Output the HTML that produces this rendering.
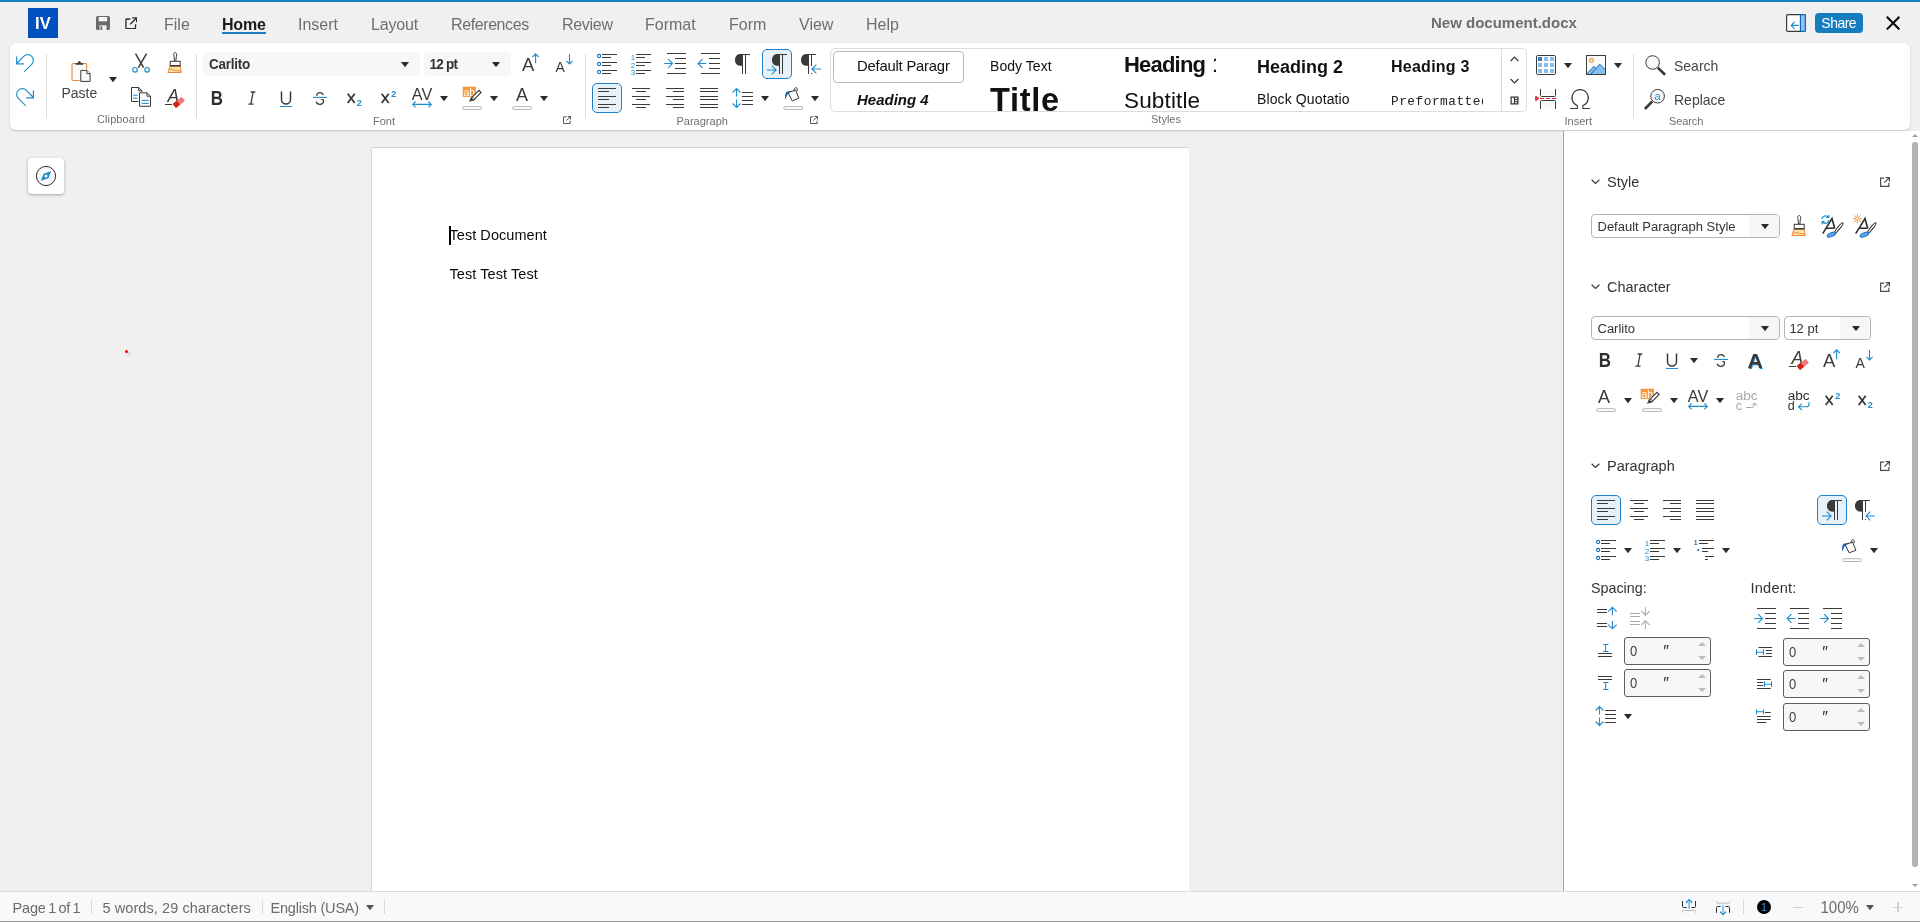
<!DOCTYPE html>
<html lang="en"><head><meta charset="utf-8"><title>New document.docx</title>
<style>
*{box-sizing:border-box;margin:0;padding:0}
html,body{width:1920px;height:922px;overflow:hidden;background:#f0f0f0;font-family:"Liberation Sans",sans-serif;color:#333}
.a{position:absolute}
svg.i{position:absolute;width:24px;height:24px;overflow:visible}
svg.d{position:absolute;width:8px;height:6px}
svg.l{position:absolute;width:10px;height:10px}
.t{position:absolute;white-space:nowrap;line-height:1}
#topline{left:0;top:0;width:1920px;height:2px;background:#157cbe}
#logo{left:28px;top:8px;width:30px;height:30px;background:#0050c0;color:#fff;font-weight:bold;font-size:16.5px;text-align:center;line-height:31px;letter-spacing:.3px}
.m{position:absolute;top:16px;font-size:16px;line-height:18px;color:#6e6e6e;white-space:nowrap;transform:scaleY(1.07);transform-origin:0 14.5px}
#ribbon{left:10px;top:43px;width:1900px;height:87px;background:#fff;border-radius:5.5px;box-shadow:0 1px 2px rgba(0,0,0,.19),0 0 1px rgba(0,0,0,.12)}
.sep{position:absolute;width:1px;background:#dedad6}
.lab{position:absolute;font-size:11px;line-height:12px;color:#707070;white-space:nowrap}
.sel{position:absolute;width:30px;height:30px;border:1px solid #1e7fc8;border-radius:5px;background:#e6f1f9}
.cb{position:absolute;height:24px;background:#f7f7f7;border-radius:4px}
.cbt{position:absolute;font-weight:bold;font-size:13.5px;line-height:14px;color:#333;white-space:nowrap;transform:scaleY(1.1);transform-origin:0 11.7px}
#stylebox{left:830px;top:48px;width:697px;height:64px;border:1px solid #dcdcdc;border-radius:5px;background:#fff;overflow:hidden}
.st{position:absolute;white-space:nowrap;color:#111;overflow:hidden}
.big{position:absolute;font-size:14px;line-height:16px;color:#454545;white-space:nowrap;transform:scaleY(1.08);transform-origin:0 12.85px}
#sidebar{left:1563px;top:131px;width:357px;height:760px;background:#fff;border-left:1px solid #a3a3a3}
.sh{position:absolute;font-size:14.5px;line-height:16px;color:#333;white-space:nowrap;transform:scaleY(1.05);transform-origin:0 13px}
.scb{position:absolute;height:24px;border:1px solid #b4b4b4;border-radius:4px;background:#fff;overflow:hidden}
.scb i{position:absolute;right:0;top:0;bottom:0;width:30px;background:#f7f7f7}
.scb b{position:absolute;left:5.5px;top:5px;font-weight:normal;font-size:13px;line-height:13px;color:#333;white-space:nowrap;transform:scaleY(1.04);transform-origin:0 11px}
.spin{position:absolute;width:87px;height:28px;border:1px solid #5e5e5e;border-radius:3px;background:#f7f7f7}
.spin b{position:absolute;left:5px;top:7px;font-weight:normal;font-size:13px;line-height:13px;color:#444;transform:scaleY(1.1);transform-origin:0 11px}
.spin u{position:absolute;left:37.5px;top:5.5px;font-style:italic;text-decoration:none;font-size:16px;line-height:15px;color:#2e2e2e}
.spin s{position:absolute;right:3.6px;width:8.8px;height:0;border-left:4.4px solid transparent;border-right:4.4px solid transparent}
.spin s.u{top:3.6px;border-bottom:4.4px solid #bdbdbd}
.spin s.dn{bottom:3.8px;border-top:4.4px solid #bdbdbd}
#status{left:0;top:891px;width:1920px;height:31px;background:#f8f9fa;border-top:1px solid #dedbd8;border-bottom:1px solid #9a9a9a}
.sb{position:absolute;top:9px;font-size:14.5px;line-height:16px;color:#6b6b6b;white-space:nowrap;transform:scaleY(1.07);transform-origin:0 13px}
.ssep{position:absolute;top:9px;width:1px;height:14px;background:#d9d9d9}
#root{position:absolute;left:0;top:0;width:1920px;height:922px;will-change:transform}
</style></head><body><div id="root">
<svg width="0" height="0" style="position:absolute">
<defs>
<!-- generic -->
<symbol id="dd" viewBox="0 0 8 6"><path d="M0 0H8L4 5.2Z" fill="#2b2b2b"/></symbol>
<symbol id="launch" viewBox="0 0 10 10"><path d="M4.2 1.1H.6V9.4H8.9V5.8" fill="none" stroke="#4d4d4d" stroke-width="1.2"/><path d="M5.6.6H9.4V4.4M9.2.8L4.3 5.7" fill="none" stroke="#4d4d4d" stroke-width="1.2"/></symbol>
<symbol id="chev" viewBox="0 0 10 6"><path d="M.7.8L5 5L9.3.8" fill="none" stroke="#3a3a3a" stroke-width="1.3"/></symbol>
<!-- undo / redo -->
<symbol id="undo" viewBox="0 0 24 24"><path d="M11.3 20.7L18.7 13.3A5.6 5.6 0 0 0 10.7 5.3L3.7 12.5M3.6 5.4V12.8H10.9" fill="none" stroke="#1e8bcd" stroke-width="1.15"/></symbol>
<symbol id="redo" viewBox="0 0 24 24"><g transform="translate(24,0) scale(-1,1)"><path d="M11.3 20.7L18.7 13.3A5.6 5.6 0 0 0 10.7 5.3L3.7 12.5M3.6 5.4V12.8H10.9" fill="none" stroke="#1e8bcd" stroke-width="1.15"/></g></symbol>
<!-- paste -->
<symbol id="paste" viewBox="0 0 24 24">
<rect x="3" y="3.5" width="14.7" height="17" rx="1.2" fill="#fafafa" stroke="#ed8733" stroke-width="1.1"/>
<path d="M6.5 4.7V3.1H8.9a1.5 2 0 0 1 3 0h2.4v1.6z" fill="#3a3a38"/>
<path d="M10.8 9.4h7.8l3.5 3.5v9.5H10.8z" fill="#fff"/>
<path d="M11.8 10.4h6.1l3.2 3.2v7.8h-9.3z" fill="#fafafa" stroke="#3a3a38" stroke-width="1"/>
<path d="M17.9 10.4v3.2h3.2" fill="#fff" stroke="#3a3a38" stroke-width="1"/>
</symbol>
<!-- cut -->
<symbol id="cut" viewBox="0 0 24 24">
<path d="M6.5 1.6L14.6 15.6M17.5 1.6L9.4 15.6" fill="none" stroke="#3a3a38" stroke-width="1.5"/>
<circle cx="6" cy="17.8" r="2.3" fill="#fff" stroke="#1e8bcd" stroke-width="1.2"/>
<circle cx="18.1" cy="17.8" r="2.3" fill="#fff" stroke="#1e8bcd" stroke-width="1.2"/>
</symbol>
<!-- clone brush -->
<symbol id="brush" viewBox="0 0 24 24">
<path d="M12.2.6c-1 0-1.5.8-1.5 1.7 0 1.5.7 3.2.7 4.8v2h1.6v-2c0-1.6.7-3.3.7-4.8 0-.9-.5-1.7-1.5-1.7z" fill="#fff" stroke="#3a3a38" stroke-width="1"/>
<rect x="7.2" y="9.3" width="10" height="4.2" fill="#fff" stroke="#3a3a38" stroke-width="1"/>
<path d="M7 14.3H17.4L18.2 20.5H4.9z" fill="#fbe2a6" stroke="#ed8733" stroke-width="1"/>
<path d="M6.2 17.2L17.8 19.3" stroke="#ed8733" stroke-width=".9" fill="none"/>
<path d="M6.9 13.9H17.5" stroke="#3a3a38" stroke-width="1.2"/>
</symbol>
<!-- copy -->
<symbol id="copy" viewBox="0 0 24 24">
<path d="M2.5 1.5h7.2l3.3 3.3v10.7H2.5z" fill="#fafafa" stroke="#3a3a38" stroke-width="1"/>
<path d="M9.7 1.5v3.3h3.3" fill="none" stroke="#3a3a38" stroke-width="1"/>
<path d="M4.2 9.3h4.4M4.2 12.2h4.4" stroke="#1e8bcd" stroke-width="1"/>
<path d="M9.5 6.3h9.3l3.7 3.6v11.4h-13z" fill="#fff"/>
<path d="M10.5 6.8h7.5l3.5 3.4v10.1h-11z" fill="#fafafa" stroke="#3a3a38" stroke-width="1"/>
<path d="M18 6.8v3.4h3.5" fill="none" stroke="#3a3a38" stroke-width="1"/>
<path d="M12.7 14.4h7M12.7 17.4h7" stroke="#1e8bcd" stroke-width="1"/>
</symbol>
<!-- clear formatting -->
<symbol id="clearfmt" viewBox="0 0 24 24">
<text x="4.5" y="15.7" font-family="Liberation Sans, sans-serif" font-style="italic" font-size="17.5" fill="#3a3a38">A</text>
<path d="M2 18.5H9" stroke="#3a3a38" stroke-width="1"/>
<g transform="translate(15.8,16.4) rotate(-39)"><rect x="-5.8" y="-2.6" width="11.6" height="5.2" rx=".7" fill="#f2787e"/><rect x="-5.8" y="-2.6" width="5.4" height="5.2" rx=".7" fill="#d42314"/></g>
</symbol>

<!-- font style icons -->
<symbol id="bold" viewBox="0 0 24 24"><text x="4.7" y="18.7" font-family="Liberation Sans, sans-serif" font-weight="bold" font-size="19.3" fill="#2e2e2e" textLength="12.2" lengthAdjust="spacingAndGlyphs">B</text></symbol>
<symbol id="italic" viewBox="0 0 24 24"><path d="M10.7 6H15.3M8.4 18.1H13.5M13.1 6L10.9 18.1" fill="none" stroke="#3a3a38" stroke-width="1.3"/></symbol>
<symbol id="uline" viewBox="0 0 24 24"><path d="M7.5 5.4V13.5a4.5 4.5 0 0 0 9 0V5.4" fill="none" stroke="#3a3a38" stroke-width="1.5"/><path d="M6 20.5H18" stroke="#1e8bcd" stroke-width="1"/></symbol>
<symbol id="strike" viewBox="0 0 24 24"><text x="7.1" y="18.7" font-family="Liberation Sans, sans-serif" font-size="18" fill="#3a3a38" textLength="9.8" lengthAdjust="spacingAndGlyphs">S</text><path d="M4.5 11.4H19.5" stroke="#fff" stroke-width="3.2"/><path d="M5 11.4H19" stroke="#1e8bcd" stroke-width="1.1"/></symbol>
<symbol id="subs" viewBox="0 0 24 24"><path d="M5.7 7.7L12.7 17M12.7 7.7L5.7 17" stroke="#3a3a38" stroke-width="1.8" fill="none"/><text x="14.7" y="20" font-family="Liberation Sans, sans-serif" font-weight="bold" font-size="9" fill="#1e8bcd">2</text></symbol>
<symbol id="sups" viewBox="0 0 24 24"><path d="M5.7 7.7L12.7 17M12.7 7.7L5.7 17" stroke="#3a3a38" stroke-width="1.8" fill="none"/><text x="15.2" y="10.6" font-family="Liberation Sans, sans-serif" font-weight="bold" font-size="9" fill="#1e8bcd">2</text></symbol>
<symbol id="kern" viewBox="0 0 24 24"><text x="1.8" y="13.7" font-family="Liberation Sans, sans-serif" font-size="16" fill="#3a3a38" textLength="20.4" lengthAdjust="spacingAndGlyphs">AV</text><path d="M2.8 18.4H21.2M5.6 15.5L2.7 18.4L5.6 21.3M18.4 15.5L21.3 18.4L18.4 21.3" fill="none" stroke="#1e8bcd" stroke-width="1.1"/></symbol>
<symbol id="hilite" viewBox="0 0 24 24"><rect x="2.7" y=".7" width="13.3" height="10.2" fill="#f39a38"/><text x="3.4" y="9.6" font-family="Liberation Sans, sans-serif" font-size="10.5" fill="#fff" textLength="11.5" lengthAdjust="spacingAndGlyphs">ab</text>
<path d="M11 12.2L19 4.3L21 6.5L13.5 14.3Z" fill="#fff" stroke="#3a3a38" stroke-width="1.15"/><path d="M8.9 15.8L10.8 12.1L13.7 14.5Z" fill="#3a3a38"/><path d="M12.4 10.9L14.8 13.1" stroke="#3a3a38" stroke-width="1" fill="none"/>
<rect x="2.7" y="20.7" width="18.8" height="2.8" rx="1.4" fill="#fff" stroke="#b4b4b4" stroke-width="1"/></symbol>
<symbol id="fcolor" viewBox="0 0 24 24"><text x="12" y="15.3" text-anchor="middle" font-family="Liberation Sans, sans-serif" font-size="18" fill="#3a3a38">A</text><rect x="2.7" y="20.7" width="18.8" height="2.8" rx="1.4" fill="#fff" stroke="#b4b4b4" stroke-width="1"/></symbol>
<symbol id="hiliteN" viewBox="0 0 24 24"><rect x="2.7" y=".7" width="13.3" height="10.2" fill="#f39a38"/><text x="3.4" y="9.6" font-family="Liberation Sans, sans-serif" font-size="10.5" fill="#fff" textLength="11.5" lengthAdjust="spacingAndGlyphs">ab</text>
<path d="M11 12.2L19 4.3L21 6.5L13.5 14.3Z" fill="#fff" stroke="#3a3a38" stroke-width="1.15"/><path d="M8.9 15.8L10.8 12.1L13.7 14.5Z" fill="#3a3a38"/><path d="M12.4 10.9L14.8 13.1" stroke="#3a3a38" stroke-width="1" fill="none"/>
</symbol>
<symbol id="fcolorN" viewBox="0 0 24 24"><text x="12" y="15.3" text-anchor="middle" font-family="Liberation Sans, sans-serif" font-size="18" fill="#3a3a38">A</text></symbol>
<symbol id="cbar" viewBox="0 0 24 24"><rect x="2.7" y="20.7" width="18.8" height="2.8" rx="1.4" fill="#fff" stroke="#b4b4b4" stroke-width="1"/></symbol>
<symbol id="grow" viewBox="0 0 24 24"><text x="3" y="18.9" font-family="Liberation Sans, sans-serif" font-size="18.5" fill="#3a3a38">A</text><path d="M16.6 11.2V1.9M13.5 5L16.6 1.9L19.7 5" fill="none" stroke="#1e8bcd" stroke-width="1.1"/></symbol>
<symbol id="shrink" viewBox="0 0 24 24"><text x="2.6" y="19.9" font-family="Liberation Sans, sans-serif" font-size="14" fill="#3a3a38">A</text><path d="M16.5 2.1V11.9M13.4 8.8L16.5 11.9L19.6 8.8" fill="none" stroke="#1e8bcd" stroke-width="1.1"/></symbol>
<symbol id="shadowA" viewBox="0 0 24 24"><text x="12.8" y="20.9" text-anchor="middle" font-family="Liberation Sans, sans-serif" font-weight="bold" font-size="21" fill="#1e8bcd">A</text><text x="12" y="19.7" text-anchor="middle" font-family="Liberation Sans, sans-serif" font-weight="bold" font-size="21" fill="#3a3a38">A</text></symbol>
<!-- paragraph icons -->
<symbol id="al" viewBox="0 0 24 24"><path d="M3 2.5H21M3 10.5H21M3 18.5H21M3 5.5H14M3 13.5H14M3 21.5H14" stroke="#3a3a38" stroke-width="1"/></symbol>
<symbol id="ac" viewBox="0 0 24 24"><path d="M3 2.5H21M3 10.5H21M3 18.5H21M7 5.5H17M7 13.5H17M7 21.5H17" stroke="#3a3a38" stroke-width="1"/></symbol>
<symbol id="ar" viewBox="0 0 24 24"><path d="M3 2.5H21M3 10.5H21M3 18.5H21M10 5.5H21M10 13.5H21M10 21.5H21" stroke="#3a3a38" stroke-width="1"/></symbol>
<symbol id="aj" viewBox="0 0 24 24"><path d="M3 2.5H21M3 10.5H21M3 18.5H21M3 5.5H21M3 13.5H21M3 21.5H21" stroke="#3a3a38" stroke-width="1"/></symbol>
<symbol id="bullets" viewBox="0 0 24 24"><path d="M7 2.5H22M7 10.5H22M7 18.5H22M7 5.5H16M7 13.5H16M7 21.5H16" stroke="#3a3a38" stroke-width="1"/><g fill="#fff" stroke="#1a6fbf" stroke-width="1.1"><circle cx="4.1" cy="4" r="1.6"/><circle cx="4.1" cy="12" r="1.6"/><circle cx="4.1" cy="20" r="1.6"/></g></symbol>
<symbol id="numbers" viewBox="0 0 24 24"><path d="M7 2.5H22M7 10.5H22M7 18.5H22M7 5.5H16M7 13.5H16M7 21.5H16" stroke="#3a3a38" stroke-width="1"/><g font-family="Liberation Sans, sans-serif" font-size="8" fill="#1e8bcd"><text x="1.8" y="7.6">1</text><text x="1.8" y="15.5">2</text><text x="1.8" y="23.4">3</text></g></symbol>
<symbol id="outline" viewBox="0 0 24 24"><path d="M7 2.5H22M10 10.5H22M13 18.5H22M7 5.5H16M10 13.5H16M13 21.5H16" stroke="#3a3a38" stroke-width="1"/><text x="1.5" y="7.4" font-family="Liberation Sans, sans-serif" font-weight="bold" font-size="7.5" fill="#1e8bcd">1</text><circle cx="6.3" cy="12" r="1.1" fill="#1a6fbf"/></symbol>
<symbol id="indinc" viewBox="0 0 24 24"><path d="M4 1.5H23M4 21.5H23M12 6.5H23M12 11.5H23M12 16.5H23" stroke="#3a3a38" stroke-width="1"/><path d="M1.2 11.5H9.3M5.2 7.2L9.5 11.5L5.2 15.8" fill="none" stroke="#1e8bcd" stroke-width="1.1"/></symbol>
<symbol id="inddec" viewBox="0 0 24 24"><path d="M4 1.5H23M4 21.5H23M12 6.5H23M12 11.5H23M12 16.5H23" stroke="#3a3a38" stroke-width="1"/><path d="M9.4 11.5H1.3M5.4 7.2L1.1 11.5L5.4 15.8" fill="none" stroke="#1e8bcd" stroke-width="1.1"/></symbol>
<symbol id="indhang" viewBox="0 0 24 24"><path d="M4 1.5H23M12 21.5H23M12 6.5H23M12 11.5H23M12 16.5H23" stroke="#3a3a38" stroke-width="1"/><path d="M1.2 11.5H9.3M5.2 7.2L9.5 11.5L5.2 15.8" fill="none" stroke="#1e8bcd" stroke-width="1.1"/></symbol>
<symbol id="pil" viewBox="0 0 16 20"><path d="M6 .5H16" stroke="#3a3a38" stroke-width="1"/><path d="M9 0H6.6C2.8 0 1 2.7 1 5.9C1 9.2 2.9 11.8 7.4 11.8H8V20H9Z" fill="#3a3a38"/><path d="M11.5 .5V20" stroke="#3a3a38" stroke-width="1"/></symbol>
<symbol id="arrR" viewBox="0 0 10 10"><path d="M0 5H9M4.7 .6L9.1 5L4.7 9.4" fill="none" stroke="#1e8bcd" stroke-width="1.1"/></symbol>
<symbol id="arrL" viewBox="0 0 10 10"><path d="M10 5H1M5.3 .6L.9 5L5.3 9.4" fill="none" stroke="#1e8bcd" stroke-width="1.1"/></symbol>
<symbol id="lsp" viewBox="0 0 24 24"><path d="M11 6.5H22M11 10.5H22M11 14.5H22M11 18.5H22" stroke="#3a3a38" stroke-width="1"/><path d="M5.5 2.6V10.4M5.5 13.6V21.4M1.6 6.5L5.5 2.6L9.4 6.5M1.6 17.5L5.5 21.4L9.4 17.5" fill="none" stroke="#1e8bcd" stroke-width="1.1"/></symbol>
<symbol id="bucket" viewBox="0 0 24 24"><path d="M4.3 13.6C3.7 10 4 6.4 6.3 5.5L10.8 4.8L7.3 7.7C6 9 5.5 11 4.3 13.6Z" fill="#1a6fbf"/><path d="M7.1 6.7L14.6 4L17.9 12.2L11.2 14.9Z" fill="#fafafa" stroke="#3a3a38" stroke-width="1"/><path d="M13.3 5.2C12.9 3 13.8 1.5 14.9 1.6C16 1.7 16.5 3.3 16.1 5" fill="none" stroke="#3a3a38" stroke-width="1"/><rect x="2.8" y="20.7" width="18.8" height="2.8" rx="1.4" fill="#fff" stroke="#b4b4b4" stroke-width="1"/></symbol>
<symbol id="bucketN" viewBox="0 0 24 24"><path d="M4.3 13.6C3.7 10 4 6.4 6.3 5.5L10.8 4.8L7.3 7.7C6 9 5.5 11 4.3 13.6Z" fill="#1a6fbf"/><path d="M7.1 6.7L14.6 4L17.9 12.2L11.2 14.9Z" fill="#fafafa" stroke="#3a3a38" stroke-width="1"/><path d="M13.3 5.2C12.9 3 13.8 1.5 14.9 1.6C16 1.7 16.5 3.3 16.1 5" fill="none" stroke="#3a3a38" stroke-width="1"/></symbol>
<!-- insert group -->
<symbol id="table" viewBox="0 0 24 24"><rect x="2.5" y="2.5" width="19" height="19" rx="1.3" fill="#fcfcfc" stroke="#3a3a38" stroke-width="1"/><g fill="#83beec"><rect x="4" y="4" width="4" height="4" fill="#3d7cba"/><rect x="10" y="4" width="4" height="4"/><rect x="16" y="4" width="4" height="4"/><rect x="4" y="10" width="4" height="4"/><rect x="10" y="10" width="4" height="4"/><rect x="16" y="10" width="4" height="4"/><rect x="4" y="16" width="4" height="4"/><rect x="10" y="16" width="4" height="4"/><rect x="16" y="16" width="4" height="4"/></g></symbol>
<symbol id="image" viewBox="0 0 24 24"><rect x="2.5" y="2.5" width="19" height="19" fill="#fafafa" stroke="#3a3a38" stroke-width="1"/><path d="M3 20.6L10 13.3L11.6 15.4L15.8 11.2L21 16.6V21H3Z" fill="#83beec"/><path d="M3 20.6L10 13.3L11.6 15.4M7 21L15.8 11.2L21.3 16.8" fill="none" stroke="#1268b8" stroke-width="1"/><circle cx="7.5" cy="7.4" r="2.1" fill="#fbe3a8" stroke="#ed8733" stroke-width="1"/><rect x="2.5" y="2.5" width="19" height="19" fill="none" stroke="#3a3a38" stroke-width="1"/></symbol>
<symbol id="pbreak" viewBox="0 0 24 24"><rect x="8.3" y="2.8" width="11.4" height="5.4" fill="#f8f8f8"/><rect x="8.3" y="14.8" width="11.4" height="6.4" fill="#f8f8f8"/><path d="M6.5 2V8.5Q6.5 9.5 7.5 9.5H20.5Q21.5 9.5 21.5 8.5V2M6.5 22V14.5Q6.5 13.5 7.5 13.5H20.5Q21.5 13.5 21.5 14.5V22" fill="none" stroke="#3a3a38" stroke-width="1"/><path d="M6 11.5H22" stroke="#dd1c24" stroke-width="1.05" stroke-dasharray="4 2"/><path d="M1.7 9.3V13.7L4.9 11.5Z" fill="#e64a52" stroke="#dd1c24" stroke-width=".9" stroke-linejoin="round"/></symbol>
<symbol id="omega" viewBox="0 0 24 24"><path d="M2.1 21.5H9.4V18.6A8.2 8.2 0 1 1 14.9 18.6V21.5H22.1" fill="none" stroke="#3a3a38" stroke-width="1.1"/></symbol>
<symbol id="search" viewBox="0 0 24 24"><circle cx="9.6" cy="9.5" r="6.8" fill="#fafafa" stroke="#3a3a38" stroke-width="1"/><path d="M14.8 14.8L22.1 21.8" stroke="#3a3a38" stroke-width="2.6"/></symbol>
<symbol id="replace" viewBox="0 0 24 24"><circle cx="14.6" cy="9.2" r="6.8" fill="#fafafa" stroke="#3a3a38" stroke-width="1"/><path d="M9.2 14.5L1.9 22" stroke="#3a3a38" stroke-width="2.6"/><text x="14.6" y="12.6" text-anchor="middle" font-family="Liberation Sans, sans-serif" font-size="11" fill="#1e8bcd">a</text></symbol>
<symbol id="save" viewBox="0 0 14 14"><path d="M1.6 0H12.4Q14 0 14 1.6V12.4Q14 14 12.4 14H1.6Q0 14 0 12.4V1.6Q0 0 1.6 0Z" fill="#6b6b6b"/><rect x="2.7" y="1" width="8.4" height="4.3" fill="#f6f6f6"/><rect x="3.5" y="9.3" width="7" height="4.7" fill="#f0f0f0"/><rect x="4.5" y="10.2" width="1.7" height="3.8" fill="#6b6b6b"/></symbol>
<symbol id="extlink" viewBox="0 0 14 14"><path d="M6 2.2H1.9Q1 2.2 1 3.1V12.1Q1 13 1.9 13H10.9Q11.8 13 11.8 12.1V8" fill="none" stroke="#2e2e2e" stroke-width="1.5"/><path d="M8 .9H13.1V6M13 1L5.8 8.2" fill="none" stroke="#2e2e2e" stroke-width="1.5"/></symbol>
<symbol id="sbtoggle" viewBox="0 0 20 18"><rect x=".6" y=".6" width="18.8" height="16.8" rx="1.2" fill="#fff" stroke="#3a3a3a" stroke-width="1.2"/><rect x="14.4" y=".6" width="5" height="16.8" rx=".8" fill="#8ec2ee" stroke="#1268b8" stroke-width="1.2"/><path d="M12.7 11.4H5.3M8.6 8L5.2 11.4L8.6 14.8" fill="none" stroke="#1e8bcd" stroke-width="1.2"/></symbol>
<symbol id="compass" viewBox="0 0 22 22"><circle cx="11" cy="11" r="9.6" fill="#fafafa" stroke="#2e2e2e" stroke-width="1"/><path d="M16.1 6.2L13.4 13.2L5.9 15.8L8.6 8.8Z" fill="#1e8bcd"/><circle cx="11" cy="11" r="1.5" fill="#fafafa"/></symbol>
<!-- sidebar small icons -->
<symbol id="spinc" viewBox="0 0 24 24"><path d="M2 3.5H12M2 6.5H12M2 17.5H12M2 20.5H12" stroke="#3a3a38" stroke-width="1"/><path d="M17.4 9.3V1.4M13.2 5.6L17.4 1.4L21.6 5.6M17.4 15V22.8M13.2 18.6L17.4 22.8L21.6 18.6" fill="none" stroke="#1e8bcd" stroke-width="1.1"/></symbol>
<symbol id="spdec" viewBox="0 0 24 24"><g opacity=".42"><path d="M2 7.5H12M2 10.5H12M2 15.5H12M2 18.5H12" stroke="#3a3a38" stroke-width="1"/><path d="M17.4 1.2V9.2M13.2 5L17.4 9.2L21.6 5M17.4 22.9V14.9M13.2 19.1L17.4 14.9L21.6 19.1" fill="none" stroke="#3a3a38" stroke-width="1.1"/></g></symbol>
<symbol id="spabove" viewBox="0 0 16 16"><path d="M1 11.5H15M1 14.5H15" stroke="#3a3a38" stroke-width="1"/><path d="M6 2.5H11.5M6 9.5H11.5M8.7 2.5V9.5" fill="none" stroke="#1e8bcd" stroke-width="1.1"/></symbol>
<symbol id="spbelow" viewBox="0 0 16 16"><path d="M1 1.5H15M1 4.5H15" stroke="#3a3a38" stroke-width="1"/><path d="M6 7.5H11.5M6 14.5H11.5M8.7 7.5V14.5" fill="none" stroke="#1e8bcd" stroke-width="1.1"/></symbol>
<symbol id="indbefore" viewBox="0 0 18 12"><path d="M2.5 1.5H16M2.5 10.5H16M10 4.5H16M10 7.5H16" stroke="#3a3a38" stroke-width="1"/><path d="M.5 3.6V8.9M7.5 3.6V8.9M.5 6.2H7.5" fill="none" stroke="#1e8bcd" stroke-width="1.1"/></symbol>
<symbol id="indafter" viewBox="0 0 18 12"><path d="M1 1.5H14.7M1 10.5H14.7M1 4.5H7.3M1 7.5H7.3" stroke="#3a3a38" stroke-width="1"/><path d="M8.5 3.6V8.9M15.5 3.6V8.9M8.5 6.2H15.5" fill="none" stroke="#1e8bcd" stroke-width="1.1"/></symbol>
<symbol id="indfirst" viewBox="0 0 18 16"><path d="M9 4.5H14.7M1 8.5H14.7M1 11.5H14.7M1 14.5H10.3" stroke="#3a3a38" stroke-width="1"/><path d="M.5 1.2V6.2M7.5 1.2V6.2M.5 3.7H7.5" fill="none" stroke="#1e8bcd" stroke-width="1.1"/></symbol>
<!-- status bar -->
<symbol id="pgprev" viewBox="0 0 20 20"><path d="M2.5 4V9.5Q2.5 10.5 3.5 10.5H6.7M15.5 4V9.5Q15.5 10.5 14.5 10.5H11.4" fill="none" stroke="#2e2e2e" stroke-width="1"/><path d="M2.5 15.7V14.5Q2.5 13.5 3.5 13.5H14.5Q15.5 13.5 15.5 14.5V15.7" fill="none" stroke="#bababa" stroke-width="1"/><rect x="8.2" y="4.6" width="1.8" height="7" fill="#7fbce8"/><path d="M6 5.7L9.1 2.7L12.2 5.7" fill="none" stroke="#1e8bcd" stroke-width="1.4"/></symbol>
<symbol id="pgnext" viewBox="0 0 20 20"><path d="M2.5 4.3V5.2Q2.5 6.1 3.5 6.1H14.5Q15.5 6.1 15.5 5.2V4.3" fill="none" stroke="#bababa" stroke-width="1"/><path d="M2.5 15.8V10.5Q2.5 9.5 3.5 9.5H6.5M15.5 15.8V10.5Q15.5 9.5 14.5 9.5H11.4" fill="none" stroke="#2e2e2e" stroke-width="1"/><rect x="8.2" y="8.2" width="1.7" height="7.2" fill="#7fbce8"/><path d="M6.2 14.8L9.05 17.5L11.9 14.8" fill="none" stroke="#1e8bcd" stroke-width="1.4"/></symbol>

<!-- style update / new -->
<symbol id="stylebase" viewBox="0 0 24 24"><path d="M2.7 19.6L12 4.6L14.7 14.5M5.5 14.3H14.5" fill="none" stroke="#2e2e2e" stroke-width="1.6"/><ellipse cx="18.85" cy="13.85" rx="6.5" ry="1.25" transform="rotate(-50.8 18.85 13.85)" fill="#fff" stroke="#2e2e2e" stroke-width="1"/><ellipse cx="11.5" cy="20.6" rx="4.6" ry="1.9" transform="rotate(-24 11.5 20.6)" fill="#5aa5ec" stroke="#1a6fbf" stroke-width="1"/></symbol>
<symbol id="updstyle" viewBox="0 0 24 24"><use href="#stylebase"/><path d="M1.8 5A3.7 3.7 0 0 1 8.4 3.3M9 6.2A3.7 3.7 0 0 1 2.4 7.9" fill="none" stroke="#1e8bcd" stroke-width="1.2"/><path d="M6.2 3.5H8.7V1M4.6 7.7H2.1V10.2" fill="none" stroke="#1e8bcd" stroke-width="1.2"/></symbol>
<symbol id="newstyle" viewBox="0 0 24 24"><use href="#stylebase"/><path d="M4.4 0V9.2M0 4.6H8.8M1.2 1.4L7.6 7.8M7.6 1.4L1.2 7.8" stroke="#f39a38" stroke-width="1"/><circle cx="4.4" cy="4.6" r="1.6" fill="#fff" stroke="#f39a38" stroke-width=".9"/></symbol>
<symbol id="abcc" viewBox="0 0 24 24"><g opacity=".45"><text x=".7" y="10.8" font-family="Liberation Sans, sans-serif" font-size="12.5" fill="#3a3a38" textLength="22" lengthAdjust="spacingAndGlyphs">abc</text><text x=".7" y="20.8" font-family="Liberation Sans, sans-serif" font-size="12.5" fill="#3a3a38">c</text><path d="M11.3 18.5H16.5C19 18.5 19.6 16.5 19.6 14.5M17 16.5L19.6 13.9L22.2 16.5" fill="none" stroke="#3a3a38" stroke-width="1"/></g></symbol>
<symbol id="abcd" viewBox="0 0 24 24"><text x=".7" y="10.8" font-family="Liberation Sans, sans-serif" font-size="12.5" fill="#2e2e2e" textLength="22" lengthAdjust="spacingAndGlyphs">abc</text><text x=".7" y="20.8" font-family="Liberation Sans, sans-serif" font-size="12.5" fill="#2e2e2e">d</text><path d="M22 13V15.2C22 16.8 21 17.8 19.4 17.8H11.8M14.8 14.6L11.6 17.8L14.8 21" fill="none" stroke="#1e8bcd" stroke-width="1.1"/></symbol>
</defs></svg>
<div class="a" id="topline"></div>
<div class="a" id="logo">IV</div>
<svg class="a" style="left:96px;top:16px;width:14px;height:14px"><use href="#save"/></svg>
<svg class="a" style="left:124.8px;top:16.7px;width:12.5px;height:12.5px"><use href="#extlink"/></svg>
<div class="m" style="left:164px">File</div>
<div class="m" style="left:222px;color:#1a1a1a;font-weight:bold;letter-spacing:-.2px">Home</div>
<div class="a" style="left:222px;top:32px;width:44px;height:2px;background:#1e7fc8"></div>
<div class="m" style="left:298px">Insert</div>
<div class="m" style="left:371px;letter-spacing:-.15px">Layout</div>
<div class="m" style="left:451px;letter-spacing:-.4px">References</div>
<div class="m" style="left:562px;letter-spacing:-.3px">Review</div>
<div class="m" style="left:645px">Format</div>
<div class="m" style="left:729px">Form</div>
<div class="m" style="left:799px">View</div>
<div class="m" style="left:866px">Help</div>
<div class="t" style="left:1431px;top:14px;font-size:15px;font-weight:bold;color:#6e6e6e;line-height:17px">New document.docx</div>
<svg class="a" style="left:1786px;top:14px;width:20px;height:18px"><use href="#sbtoggle"/></svg>
<div class="a" style="left:1815px;top:13px;width:48px;height:20px;background:#157cbe;border-radius:4px"></div>
<div class="t" style="left:1821.3px;top:15px;font-size:14px;line-height:16px;color:#fff;letter-spacing:-.5px;transform:scaleY(1.08);transform-origin:0 12.85px">Share</div>
<svg class="a" style="left:1886px;top:16px;width:14px;height:14px"><path d="M.8.8L13.4 13.4M13.4.8L.8 13.4" stroke="#0a0a0a" stroke-width="2.1" fill="none"/></svg>

<div class="a" id="ribbon"></div>
<!-- undo/redo -->
<svg class="i" style="left:13px;top:51px"><use href="#undo"/></svg>
<svg class="i" style="left:13px;top:85px"><use href="#redo"/></svg>
<div class="sep" style="left:46px;top:54px;height:64px"></div>
<!-- clipboard -->
<svg class="i" style="left:68.5px;top:60px"><use href="#paste"/></svg>
<div class="t" style="left:61.5px;top:86px;font-size:14px;line-height:14px;color:#454545;transform:scaleY(1.07);transform-origin:0 11.85px">Paste</div>
<svg class="d" style="left:109px;top:77px"><use href="#dd"/></svg>
<svg class="i" style="left:129px;top:52px"><use href="#cut"/></svg>
<svg class="i" style="left:163px;top:52px"><use href="#brush"/></svg>
<svg class="i" style="left:129px;top:86px"><use href="#copy"/></svg>
<svg class="i" style="left:163px;top:86px"><use href="#clearfmt"/></svg>
<div class="lab" style="left:97px;top:113px;letter-spacing:.1px">Clipboard</div>
<div class="sep" style="left:196px;top:54px;height:64px"></div>
<!-- font -->
<div class="cb" style="left:203px;top:52px;width:217px"></div>
<div class="cbt" style="left:209px;top:57.7px;letter-spacing:-.25px">Carlito</div>
<svg class="d" style="left:401px;top:62px"><use href="#dd"/></svg>
<div class="cb" style="left:424px;top:52px;width:87px"></div>
<div class="cbt" style="left:429.6px;top:57.7px;letter-spacing:-.75px">12 pt</div>
<svg class="d" style="left:492px;top:62px"><use href="#dd"/></svg>
<svg class="i" style="left:519px;top:52px"><use href="#grow"/></svg>
<svg class="i" style="left:553px;top:52px"><use href="#shrink"/></svg>
<svg class="i" style="left:206px;top:86px"><use href="#bold"/></svg>
<svg class="i" style="left:240px;top:86px"><use href="#italic"/></svg>
<svg class="i" style="left:274px;top:86px"><use href="#uline"/></svg>
<svg class="i" style="left:308px;top:86px"><use href="#strike"/></svg>
<svg class="i" style="left:342px;top:86px"><use href="#subs"/></svg>
<svg class="i" style="left:376px;top:86px"><use href="#sups"/></svg>
<svg class="i" style="left:410px;top:86px"><use href="#kern"/></svg>
<svg class="d" style="left:440px;top:96px"><use href="#dd"/></svg>
<svg class="i" style="left:460px;top:86px"><use href="#hilite"/></svg>
<svg class="d" style="left:490px;top:96px"><use href="#dd"/></svg>
<svg class="i" style="left:510px;top:86px"><use href="#fcolor"/></svg>
<svg class="d" style="left:540px;top:96px"><use href="#dd"/></svg>
<div class="lab" style="left:373px;top:115px">Font</div>
<svg class="a" style="left:563px;top:116px;width:8px;height:8px"><use href="#launch"/></svg>
<div class="sep" style="left:585px;top:54px;height:64px"></div>
<!-- paragraph -->
<svg class="i" style="left:595px;top:52px"><use href="#bullets"/></svg>
<svg class="i" style="left:629px;top:52px"><use href="#numbers"/></svg>
<svg class="i" style="left:663px;top:52px"><use href="#indinc"/></svg>
<svg class="i" style="left:697px;top:52px"><use href="#inddec"/></svg>
<svg class="a" style="left:734px;top:54px;width:16px;height:20px"><use href="#pil"/></svg>
<div class="sel" style="left:762px;top:49px"></div>
<svg class="a" style="left:771px;top:54px;width:16px;height:20px"><use href="#pil"/></svg>
<svg class="a" style="left:767px;top:64.5px;width:10px;height:10px"><use href="#arrR"/></svg>
<svg class="a" style="left:800px;top:54px;width:16px;height:20px"><use href="#pil"/></svg>
<div class="a" style="left:810.5px;top:66px;width:2.5px;height:7px;background:#fff"></div><svg class="a" style="left:811px;top:64.2px;width:10px;height:10px"><use href="#arrL"/></svg>
<div class="sel" style="left:592px;top:83px"></div>
<svg class="i" style="left:595px;top:86px"><use href="#al"/></svg>
<svg class="i" style="left:629px;top:86px"><use href="#ac"/></svg>
<svg class="i" style="left:663px;top:86px"><use href="#ar"/></svg>
<svg class="i" style="left:697px;top:86px"><use href="#aj"/></svg>
<svg class="i" style="left:731px;top:86px"><use href="#lsp"/></svg>
<svg class="d" style="left:761px;top:96px"><use href="#dd"/></svg>
<svg class="i" style="left:781px;top:86px"><use href="#bucket"/></svg>
<svg class="d" style="left:811px;top:96px"><use href="#dd"/></svg>
<div class="lab" style="left:676.5px;top:115px">Paragraph</div>
<svg class="a" style="left:810px;top:116px;width:8px;height:8px"><use href="#launch"/></svg>
<!-- styles -->
<div class="a" id="stylebox">
<div class="a" style="left:2px;top:2px;width:131px;height:32px;border:1px solid #b8b8b8;border-radius:4px"></div>
<div class="st" style="left:26px;top:8px;width:92.5px;font-size:14.8px;line-height:18px;letter-spacing:-.2px">Default Paragraph</div>
<div class="st" style="left:159px;top:8px;font-size:14px;line-height:18px;letter-spacing:.05px">Body Text</div>
<div class="st" style="left:293px;top:2.8px;width:92px;font-size:22px;line-height:26px;font-weight:bold;letter-spacing:-.8px;word-spacing:2px">Heading 1</div>
<div class="st" style="left:426px;top:7px;font-size:18px;line-height:22px;font-weight:bold">Heading 2</div>
<div class="st" style="left:560px;top:8px;font-size:16px;line-height:20px;font-weight:bold;letter-spacing:.25px">Heading 3</div>
<div class="st" style="left:26px;top:42px;font-size:15px;line-height:18px;font-weight:bold;font-style:italic">Heading 4</div>
<div class="st" style="left:159px;top:32.5px;font-size:32.5px;line-height:36px;font-weight:bold;letter-spacing:.7px">Title</div>
<div class="st" style="left:293px;top:38.5px;font-size:22.5px;line-height:26px;letter-spacing:.15px">Subtitle</div>
<div class="st" style="left:426px;top:41px;width:91.5px;font-size:14px;line-height:18px;letter-spacing:.12px">Block Quotation</div>
<div class="st" style="left:560px;top:44px;width:92px;font-family:'Liberation Mono',monospace;font-size:12.8px;letter-spacing:.5px;line-height:18px;color:#222">Preformatted</div>
<div class="a" style="left:670px;top:0;width:1px;height:64px;background:#dcdcdc"></div>
<svg class="a" style="left:678.5px;top:7px;width:9px;height:6px"><path d="M.6 5L4.5 1.1L8.4 5" fill="none" stroke="#3a3a3a" stroke-width="1.2"/></svg>
<svg class="a" style="left:678.5px;top:29px;width:9px;height:6px"><path d="M.6 1L4.5 4.9L8.4 1" fill="none" stroke="#3a3a3a" stroke-width="1.2"/></svg>
<svg class="a" style="left:679px;top:47px;width:9px;height:9px"><rect x="1.1" y="1.1" width="6.8" height="6.8" fill="#fff" stroke="#2e2e2e" stroke-width="1.2"/><path d="M4.5 1V8M4.5 3.4H8M4.5 5.6H8" stroke="#2e2e2e" stroke-width="1"/></svg>
</div>
<div class="lab" style="left:1151px;top:113px">Styles</div>
<!-- insert -->
<svg class="i" style="left:1534px;top:53px"><use href="#table"/></svg>
<svg class="d" style="left:1564px;top:63px"><use href="#dd"/></svg>
<svg class="i" style="left:1584px;top:53px"><use href="#image"/></svg>
<svg class="d" style="left:1614px;top:63px"><use href="#dd"/></svg>
<svg class="i" style="left:1534px;top:87px"><use href="#pbreak"/></svg>
<svg class="i" style="left:1568px;top:87px"><use href="#omega"/></svg>
<div class="lab" style="left:1564.5px;top:115px">Insert</div>
<div class="sep" style="left:1633px;top:54px;height:64px"></div>
<!-- search -->
<svg class="i" style="left:1643px;top:53px"><use href="#search"/></svg>
<div class="big" style="left:1674px;top:57.5px">Search</div>
<svg class="i" style="left:1643px;top:87px"><use href="#replace"/></svg>
<div class="big" style="left:1674px;top:91.5px">Replace</div>
<div class="lab" style="left:1669px;top:115px;letter-spacing:-.1px">Search</div>

<!-- document area -->
<div class="a" style="left:28px;top:158px;width:36px;height:36px;background:#fff;border-radius:4px;box-shadow:0 1px 3px rgba(0,0,0,.32)"></div>
<svg class="a" style="left:35px;top:165px;width:22px;height:22px"><use href="#compass"/></svg>
<div class="a" style="left:125px;top:350px;width:3px;height:3px;border-radius:2px;background:#ff0000;box-shadow:0 0 1px 1px rgba(255,255,255,.22),2px 2px 2px rgba(0,0,0,.2)"></div>
<div class="a" style="left:371px;top:147px;width:818px;height:744px;background:#fff;border-top:1px solid #d2d2d2;border-left:1px solid #dcdcdc;border-radius:3px 3px 0 0"></div>
<div class="a" style="left:449px;top:225.5px;width:2px;height:19px;background:#000"></div>
<div class="t" style="left:449.5px;top:227px;font-size:14.5px;line-height:16px;color:#0a0a0a;letter-spacing:.05px">Test Document</div>
<div class="t" style="left:449.5px;top:265.5px;font-size:14.5px;line-height:16px;color:#0a0a0a;letter-spacing:.08px">Test Test Test</div>
<!-- sidebar -->
<div class="a" id="sidebar"></div>
<svg class="a" style="left:1912px;top:134px;width:6px;height:3px"><path d="M0 3L3 0L6 3Z" fill="#9c9c9c"/></svg>
<div class="a" style="left:1912px;top:142px;width:6px;height:725px;border-radius:3px;background:#b3b3b3"></div>
<svg class="a" style="left:1912px;top:884px;width:6px;height:3px"><path d="M0 0L3 3L6 0Z" fill="#9c9c9c"/></svg>
<!-- Style -->
<svg class="a" style="left:1591.3px;top:178.5px;width:9px;height:5.4px"><use href="#chev"/></svg>
<div class="sh" style="left:1607px;top:174px">Style</div>
<svg class="l" style="left:1880px;top:177px"><use href="#launch"/></svg>
<div class="scb" style="left:1591px;top:214px;width:189px"><i></i><b>Default Paragraph Style</b></div>
<svg class="d" style="left:1761px;top:224px"><use href="#dd"/></svg>
<svg class="i" style="left:1787px;top:215px"><use href="#brush"/></svg>
<svg class="i" style="left:1820px;top:214px"><use href="#updstyle"/></svg>
<svg class="i" style="left:1853px;top:214px"><use href="#newstyle"/></svg>
<!-- Character -->
<svg class="a" style="left:1591.3px;top:284px;width:9px;height:5.4px"><use href="#chev"/></svg>
<div class="sh" style="left:1607px;top:279px">Character</div>
<svg class="l" style="left:1880px;top:282px"><use href="#launch"/></svg>
<div class="scb" style="left:1591px;top:316px;width:189px"><i></i><b>Carlito</b></div>
<svg class="d" style="left:1761px;top:325.5px"><use href="#dd"/></svg>
<div class="scb" style="left:1784px;top:316px;width:87px"><i></i><b style="left:4.4px">12 pt</b></div>
<svg class="d" style="left:1852px;top:325.5px"><use href="#dd"/></svg>
<svg class="i" style="left:1594px;top:348px"><use href="#bold"/></svg>
<svg class="i" style="left:1627px;top:348px"><use href="#italic"/></svg>
<svg class="i" style="left:1660px;top:348px"><use href="#uline"/></svg>
<svg class="d" style="left:1690px;top:358px"><use href="#dd"/></svg>
<svg class="i" style="left:1709px;top:348px"><use href="#strike"/></svg>
<svg class="i" style="left:1742.5px;top:348px"><use href="#shadowA"/></svg>
<svg class="i" style="left:1787px;top:348px"><use href="#clearfmt"/></svg>
<svg class="i" style="left:1820px;top:348px"><use href="#grow"/></svg>
<svg class="i" style="left:1853px;top:348px"><use href="#shrink"/></svg>
<svg class="i" style="left:1592.2px;top:388px"><use href="#fcolorN"/></svg><svg class="i" style="left:1594px;top:388px"><use href="#cbar"/></svg>
<svg class="d" style="left:1624px;top:398px"><use href="#dd"/></svg>
<svg class="i" style="left:1638px;top:388px"><use href="#hiliteN"/></svg><svg class="i" style="left:1640px;top:388px"><use href="#cbar"/></svg>
<svg class="d" style="left:1670px;top:398px"><use href="#dd"/></svg>
<svg class="i" style="left:1686px;top:388px"><use href="#kern"/></svg>
<svg class="d" style="left:1716px;top:398px"><use href="#dd"/></svg>
<svg class="i" style="left:1735px;top:389px"><use href="#abcc"/></svg>
<svg class="i" style="left:1787px;top:389px"><use href="#abcd"/></svg>
<svg class="i" style="left:1820px;top:388px"><use href="#sups"/></svg>
<svg class="i" style="left:1853px;top:388px"><use href="#subs"/></svg>
<!-- Paragraph -->
<svg class="a" style="left:1591.3px;top:463px;width:9px;height:5.4px"><use href="#chev"/></svg>
<div class="sh" style="left:1607px;top:458px">Paragraph</div>
<svg class="l" style="left:1880px;top:461px"><use href="#launch"/></svg>
<div class="sel" style="left:1591px;top:495px"></div>
<svg class="i" style="left:1594px;top:498px"><use href="#al"/></svg>
<svg class="i" style="left:1627px;top:498px"><use href="#ac"/></svg>
<svg class="i" style="left:1660px;top:498px"><use href="#ar"/></svg>
<svg class="i" style="left:1693px;top:498px"><use href="#aj"/></svg>
<div class="sel" style="left:1817px;top:495px"></div>
<svg class="a" style="left:1826px;top:500px;width:16px;height:20px"><use href="#pil"/></svg>
<svg class="a" style="left:1822px;top:510.5px;width:10px;height:10px"><use href="#arrR"/></svg>
<svg class="a" style="left:1854px;top:500px;width:16px;height:20px"><use href="#pil"/></svg>
<div class="a" style="left:1864.5px;top:512px;width:2.5px;height:7px;background:#fff"></div><svg class="a" style="left:1865px;top:510.5px;width:10px;height:10px"><use href="#arrL"/></svg>
<svg class="i" style="left:1594px;top:538px"><use href="#bullets"/></svg>
<svg class="d" style="left:1624px;top:548px"><use href="#dd"/></svg>
<svg class="i" style="left:1643px;top:538px"><use href="#numbers"/></svg>
<svg class="d" style="left:1673px;top:548px"><use href="#dd"/></svg>
<svg class="i" style="left:1692px;top:538px"><use href="#outline"/></svg>
<svg class="d" style="left:1722px;top:548px"><use href="#dd"/></svg>
<svg class="i" style="left:1838.3px;top:538px"><use href="#bucketN"/></svg><svg class="i" style="left:1840px;top:538px"><use href="#cbar"/></svg>
<svg class="d" style="left:1870px;top:548px"><use href="#dd"/></svg>
<div class="sh" style="left:1591px;top:580px;font-size:14.3px">Spacing:</div>
<div class="sh" style="left:1750.5px;top:580px;font-size:14.6px;letter-spacing:.2px">Indent:</div>
<svg class="i" style="left:1595px;top:606px"><use href="#spinc"/></svg>
<svg class="i" style="left:1628px;top:606px"><use href="#spdec"/></svg>
<svg class="a" style="left:1597px;top:642px;width:16px;height:16px"><use href="#spabove"/></svg>
<div class="spin" style="left:1624px;top:637px"><b>0</b><u>&#8243;</u><s class="u"></s><s class="dn"></s></div>
<svg class="a" style="left:1597px;top:675px;width:16px;height:16px"><use href="#spbelow"/></svg>
<div class="spin" style="left:1624px;top:669px"><b>0</b><u>&#8243;</u><s class="u"></s><s class="dn"></s></div>
<svg class="i" style="left:1594px;top:704px"><use href="#lsp"/></svg>
<svg class="d" style="left:1624px;top:714px"><use href="#dd"/></svg>
<svg class="i" style="left:1753px;top:607px"><use href="#indinc"/></svg>
<svg class="i" style="left:1786px;top:607px"><use href="#inddec"/></svg>
<svg class="i" style="left:1819px;top:607px"><use href="#indhang"/></svg>
<svg class="a" style="left:1756px;top:646px;width:18px;height:12px"><use href="#indbefore"/></svg>
<div class="spin" style="left:1783px;top:638px"><b>0</b><u>&#8243;</u><s class="u"></s><s class="dn"></s></div>
<svg class="a" style="left:1756px;top:678px;width:18px;height:12px"><use href="#indafter"/></svg>
<div class="spin" style="left:1783px;top:670px"><b>0</b><u>&#8243;</u><s class="u"></s><s class="dn"></s></div>
<svg class="a" style="left:1756px;top:708px;width:18px;height:16px"><use href="#indfirst"/></svg>
<div class="spin" style="left:1783px;top:703px"><b>0</b><u>&#8243;</u><s class="u"></s><s class="dn"></s></div>
<!-- status bar -->
<div class="a" id="status"></div>
<div class="sb" style="left:12.5px;top:899.5px;letter-spacing:-.15px;word-spacing:-1.5px">Page 1 of 1</div>
<div class="ssep" style="left:91px;top:900px"></div>
<div class="sb" style="left:102.5px;top:899.5px;letter-spacing:.08px">5 words, 29 characters</div>
<div class="ssep" style="left:262px;top:900px"></div>
<div class="sb" style="left:270.5px;top:899.5px;letter-spacing:-.2px">English (USA)</div>
<svg class="d" style="left:366px;top:905px;width:8px;height:6px"><path d="M0 0H8L4 5.3Z" fill="#555"/></svg>
<div class="ssep" style="left:384px;top:900px"></div>
<svg class="a" style="left:1680px;top:897px;width:20px;height:20px"><use href="#pgprev"/></svg>
<svg class="a" style="left:1714px;top:897px;width:20px;height:20px"><use href="#pgnext"/></svg>
<div class="ssep" style="left:1743px;top:900px"></div>
<div class="a" style="left:1757.3px;top:900.2px;width:13.4px;height:13.4px;border-radius:7px;background:#000;color:#2196e8;font-size:11.5px;line-height:15.2px;text-align:center">1</div>
<div class="a" style="left:1793px;top:906.5px;width:10px;height:1.3px;background:#d2d2d2"></div>
<div class="sb" style="left:1820.5px;top:899.5px;font-size:15px">100%</div>
<svg class="d" style="left:1866px;top:905px;width:8px;height:6px"><path d="M0 0H8L4 5.3Z" fill="#555"/></svg>
<div class="a" style="left:1893px;top:906.5px;width:10px;height:1.3px;background:#d2d2d2"></div>
<div class="a" style="left:1897.4px;top:902px;width:1.3px;height:10px;background:#d2d2d2"></div>
</div></body></html>
